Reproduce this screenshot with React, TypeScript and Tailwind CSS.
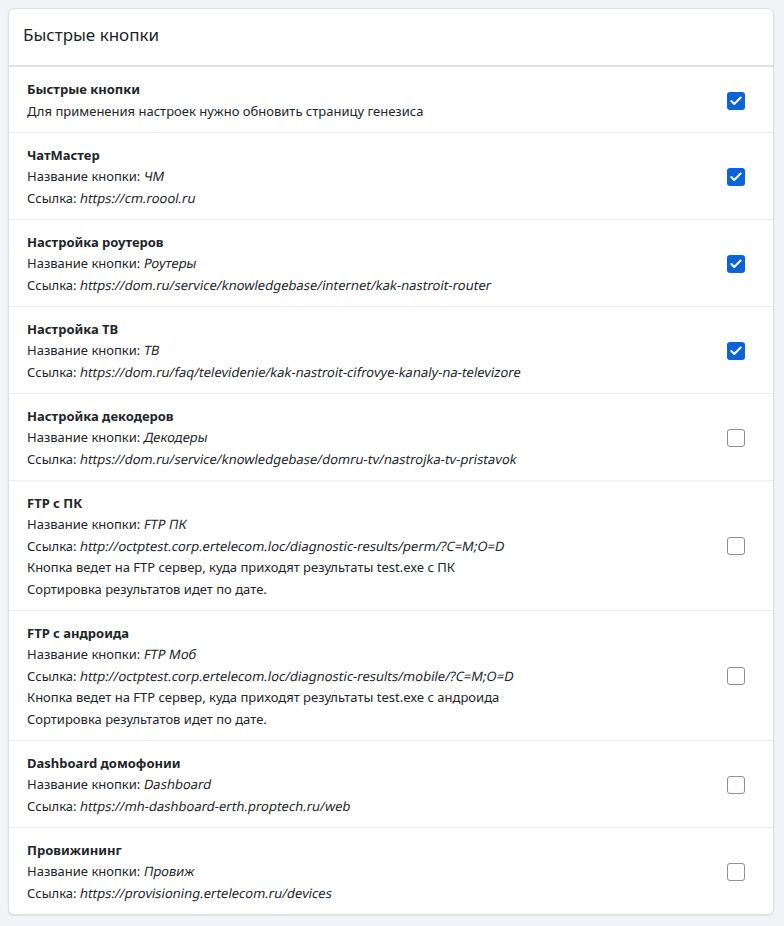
import { Check } from 'lucide-react';

type Item = {
    title: string;
    name?: string;
    link?: string;
    extra?: string[];
    desc?: string;
    checked: boolean;
};

const items: Item[] = [
    { title: 'Быстрые кнопки', desc: 'Для применения настроек нужно обновить страницу генезиса', checked: true },
    { title: 'ЧатМастер', name: 'ЧМ', link: 'https://cm.roool.ru', checked: true },
    { title: 'Настройка роутеров', name: 'Роутеры', link: 'https://dom.ru/service/knowledgebase/internet/kak-nastroit-router', checked: true },
    { title: 'Настройка ТВ', name: 'ТВ', link: 'https://dom.ru/faq/televidenie/kak-nastroit-cifrovye-kanaly-na-televizore', checked: true },
    { title: 'Настройка декодеров', name: 'Декодеры', link: 'https://dom.ru/service/knowledgebase/domru-tv/nastrojka-tv-pristavok', checked: false },
    {
        title: 'FTP с ПК',
        name: 'FTP ПК',
        link: 'http://octptest.corp.ertelecom.loc/diagnostic-results/perm/?C=M;O=D',
        extra: ['Кнопка ведет на FTP сервер, куда приходят результаты test.exe с ПК', 'Сортировка результатов идет по дате.'],
        checked: false,
    },
    {
        title: 'FTP с андроида',
        name: 'FTP Моб',
        link: 'http://octptest.corp.ertelecom.loc/diagnostic-results/mobile/?C=M;O=D',
        extra: ['Кнопка ведет на FTP сервер, куда приходят результаты test.exe с андроида', 'Сортировка результатов идет по дате.'],
        checked: false,
    },
    { title: 'Dashboard домофонии', name: 'Dashboard', link: 'https://mh-dashboard-erth.proptech.ru/web', checked: false },
    { title: 'Провижининг', name: 'Провиж', link: 'https://provisioning.ertelecom.ru/devices', checked: false },
];

// наклонный текст (ширина как у обычного начертания)
function Em({ children }: { children: string }) {
    return <span className="inline-block leading-[13px] -skew-x-[11deg]">{children}</span>;
}

function Box({ checked }: { checked: boolean }) {
    // чекбокс в стиле bootstrap
    if (checked) {
        return (
            <div className="w-[18px] h-[18px] rounded-[3px] bg-[#0b63d9] flex items-center justify-center shrink-0">
                <Check size={14} strokeWidth={3.5} className="text-white" />
            </div>
        );
    }
    return <div className="w-[18px] h-[18px] rounded-[3px] border border-[#8f8c9b] bg-white shrink-0" />;
}

export default function App() {
    return (
        <div className="min-h-screen bg-[#f3f4f8] pt-2 pl-2 pr-[10px] font-['Noto_Sans',sans-serif] text-[#212529]">
            <div className="bg-white border border-[#dcdde1] rounded-md shadow-[0_1px_2px_rgba(0,0,0,0.08)] overflow-hidden">
                <div className="h-[58px] px-[14px] pb-[4px] flex items-center text-[17px] border-b-2 border-[#dfe0e3]">
                    Быстрые кнопки
                </div>
                {items.map((it, i) => (
                    <div
                        key={i}
                        className={
                            'flex items-center justify-between pl-[18px] pr-[28px] pt-[12px] pb-[9.5px] text-[13px] leading-[21.5px] ' +
                            (i < items.length - 1 ? 'border-b border-[#ececef]' : '')
                        }
                    >
                        <div>
                            <div className="font-bold">{it.title}</div>
                            {it.desc && <div>{it.desc}</div>}
                            {it.name && (
                                <div>
                                    Название кнопки: <Em>{it.name}</Em>
                                </div>
                            )}
                            {it.link && (
                                <div>
                                    Ссылка: <Em>{it.link}</Em>
                                </div>
                            )}
                            {it.extra?.map((e, j) => <div key={j}>{e}</div>)}
                        </div>
                        <Box checked={it.checked} />
                    </div>
                ))}
            </div>
        </div>
    );
}
